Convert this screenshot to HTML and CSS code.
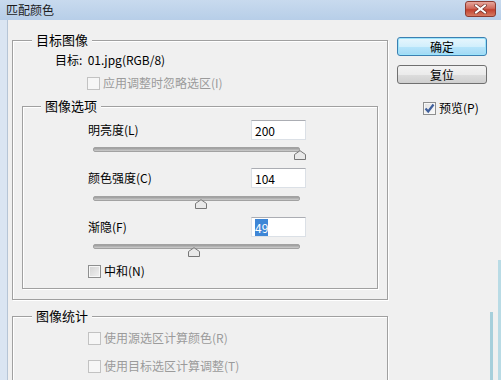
FILE: index.html
```html
<!doctype html>
<html>
    <head>
        <meta charset="utf-8">
        <title>匹配颜色</title>
        <link rel="stylesheet" href="styles.css">
    </head>

    <body>
        <div class="window">
            <div class="titlebar">
                <span class="title">匹配颜色</span>
                <span class="close">
                    <svg width="13" height="10" viewBox="0 0 13 10">
                        <path d="M2 1.5 L11 8.5 M11 1.5 L2 8.5" stroke="#6b2a22" stroke-width="3.4" stroke-linecap="square"/>
                        <path d="M2 1.5 L11 8.5 M11 1.5 L2 8.5" stroke="#fff" stroke-width="2" stroke-linecap="square"/>
                    </svg>
                </span>
            </div>

            <div class="frame">
                <div class="client">
                    <div class="main">
                        <div class="group target">
                            <span class="legend">目标图像</span>
                            <div class="info">目标:&nbsp;&nbsp;01.jpg(RGB/8)</div>
                            <label class="check disabled ignore"><span class="cb"></span>应用调整时忽略选区(I)</label>

                            <div class="group options">
                                <span class="legend">图像选项</span>

                                <div class="slider first">
                                    <div class="slider-row">
                                        <span>明亮度(L)</span>
                                        <div class="field">200</div>
                                    </div>
                                    <div class="track">
                                        <svg class="thumb" style="left: 200px" width="12" height="10" viewBox="0 0 12 10"><path d="M0.5 9.5 V4.5 L6 0.7 L11.5 4.5 V9.5 Z"/></svg>
                                    </div>
                                </div>

                                <div class="slider">
                                    <div class="slider-row">
                                        <span>颜色强度(C)</span>
                                        <div class="field">104</div>
                                    </div>
                                    <div class="track">
                                        <svg class="thumb" style="left: 101px" width="12" height="10" viewBox="0 0 12 10"><path d="M0.5 9.5 V4.5 L6 0.7 L11.5 4.5 V9.5 Z"/></svg>
                                    </div>
                                </div>

                                <div class="slider">
                                    <div class="slider-row">
                                        <span>渐隐(F)</span>
                                        <div class="field"><span class="sel">49</span></div>
                                    </div>
                                    <div class="track">
                                        <svg class="thumb" style="left: 94px" width="12" height="10" viewBox="0 0 12 10"><path d="M0.5 9.5 V4.5 L6 0.7 L11.5 4.5 V9.5 Z"/></svg>
                                    </div>
                                </div>

                                <label class="check neutral"><span class="cb"></span>中和(N)</label>
                            </div>
                        </div>

                        <div class="group stats">
                            <span class="legend">图像统计</span>
                            <label class="check disabled stat-first"><span class="cb"></span>使用源选区计算颜色(R)</label>
                            <label class="check disabled stat-second"><span class="cb"></span>使用目标选区计算调整(T)</label>
                        </div>
                    </div>

                    <div class="side">
                        <div class="btn default">确定</div>
                        <div class="btn reset">复位</div>
                        <label class="check preview">
                            <span class="cb checked">
                                <svg width="11" height="11" viewBox="0 0 11 11">
                                    <path d="M1.5 5.5 L4.2 8.5 L9.5 1.5" fill="none" stroke="#3f5f9c" stroke-width="2.2"/>
                                </svg>
                            </span>预览(P)
                        </label>
                    </div>
                </div>
            </div>
        </div>
    </body>
</html>
```

FILE: styles.css
```css
* {
    box-sizing: border-box;
}

body {
    margin: 0;
    font-family: "Noto Sans CJK SC", sans-serif;
    font-size: 12px;
    line-height: 16px;
    color: #000;
}

.window {
    width: 501px;
    height: 380px;
    display: flex;
    flex-direction: column;
    overflow: hidden;
    background: #dae5f2;
}

/* title bar */

.titlebar {
    height: 20px;
    flex: none;
    display: flex;
    justify-content: space-between;
    align-items: flex-start;
    padding: 1px 5px 0 6px;
    background: linear-gradient(#c8daee, #b7cee8);
}

.title {
    line-height: 18px;
    color: #1b1b1b;
}

.close {
    width: 31px;
    height: 16px;
    display: flex;
    align-items: center;
    justify-content: center;
    border: 1px solid #8c3b31;
    border-radius: 3px;
    background: linear-gradient(#e7a69c, #d06a5c 45%, #c2412f 55%, #d67a62);
}

/* client area */

.frame {
    flex: 1;
    display: flex;
    padding-left: 7px;
    min-height: 0;
}

.client {
    flex: 1;
    display: flex;
    gap: 9px;
    padding: 17px 0 0 4px;
    border-left: 1px solid #b6c5d6;
    background:
        linear-gradient(#a6cfdb, #a6cfdb) 482px 292px / 3px 100px no-repeat,
        linear-gradient(#b9dbe5, #b9dbe5) 490px 240px / 3px 200px no-repeat,
        #f0f0f0;
}

.main {
    width: 376px;
    flex: none;
    padding-top: 3px;
}

.group {
    border: 1px solid #a0a0a0;
    box-shadow: 1px 1px 0 #fff, inset 1px 1px 0 #fff;
}

.legend {
    display: table;
    margin: -9px 0 0 19px;
    padding: 0 4px;
    font-size: 13px;
    line-height: 16px;
    background: #f0f0f0;
}

.target {
    padding-bottom: 10px;
}

.info {
    margin: 4px 0 0 42px;
}

.check {
    display: flex;
    align-items: center;
    height: 16px;
}

.check.disabled {
    color: #9b9b9b;
}

.cb {
    width: 13px;
    height: 13px;
    flex: none;
    margin-right: 3px;
    display: flex;
    align-items: center;
    justify-content: center;
    border: 1px solid #8e8f8f;
    background: linear-gradient(135deg, #d2d2d2, #f2f2f2);
    box-shadow: inset 0 0 0 1px #f7f7f7;
}

.disabled .cb {
    border-color: #c2c2c2;
    background: #f6f6f6;
    box-shadow: none;
}

.cb.checked {
    background: linear-gradient(135deg, #e0e0e0, #fbfbfb);
}

.ignore {
    margin: 7px 0 0 74px;
}

.options {
    margin: 15px 9px 0 9px;
    padding-bottom: 9px;
}

.options .legend {
    margin-left: 18px;
}

/* sliders */

.slider {
    width: 218px;
    margin: 16px 0 0 65px;
}

.slider.first {
    margin-top: 6px;
}

.slider-row {
    height: 20px;
    display: flex;
    justify-content: space-between;
    align-items: center;
}

.field {
    width: 55px;
    height: 20px;
    padding: 1px 0 0 3px;
    line-height: 17px;
    border: 1px solid #dbe0e6;
    border-top-color: #abadb3;
    background: #fff;
}

.sel {
    background: #3e86d6;
    color: #fff;
}

.track {
    position: relative;
    width: 207px;
    height: 5px;
    margin: 7px 0 0 5px;
    border: 1px solid #a2a2a2;
    border-radius: 2px;
    background: linear-gradient(#9b9b9b, #cdcdcd);
}

.slider:nth-child(3) .track {
    margin-top: 8px;
}

.thumb {
    position: absolute;
    top: 2px;
    display: block;
    fill: #e9e9e9;
    stroke: #777;
}

.neutral {
    margin: 14px 0 0 65px;
}

.stats {
    margin-top: 16px;
    padding-bottom: 30px;
}

.stat-first {
    margin: 6px 0 0 75px;
}

.stat-second {
    margin: 12px 0 0 75px;
}

/* right column */

.side {
    width: 90px;
    flex: none;
}

.btn {
    height: 19px;
    line-height: 17px;
    text-align: center;
    border: 1px solid #707070;
    border-radius: 3px;
    background: linear-gradient(#f3f3f3, #ebebeb 50%, #dddddd 51%, #cfcfcf);
}

.btn.default {
    border-color: #3c7fb1;
    background: linear-gradient(#e7f6fd, #d2effc 50%, #b7e5fb 51%, #a2d9f4);
    box-shadow: inset 0 0 0 1px #9ce4fb;
}

.btn.reset {
    margin-top: 9px;
}

.preview {
    margin: 16px 0 0 26px;
}
```
